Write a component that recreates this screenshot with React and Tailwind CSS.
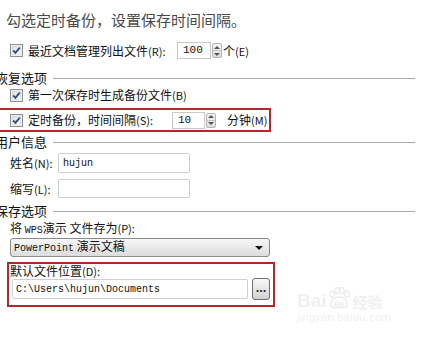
import React from 'react';

const cjk = "font-['SimSun','Noto_Sans_CJK_SC',sans-serif]";
const mono = "font-['Liberation_Mono','Noto_Sans_CJK_SC',monospace]";

const Check = () => (
  <svg width="13" height="13" viewBox="0 0 13 13" className="shrink-0">
    <defs>
      <linearGradient id="cb" x1="0" y1="0" x2="1" y2="1">
        <stop offset="0" stopColor="#dcdcdc" />
        <stop offset="1" stopColor="#ffffff" />
      </linearGradient>
    </defs>
    <rect x="0.5" y="0.5" width="12" height="12" fill="#fff" stroke="#8e8f8f" />
    <rect x="2" y="2" width="9" height="9" fill="url(#cb)" stroke="#c6c6c6" strokeWidth="0.6" />
    <path d="M3.2 6.4 L5.4 8.8 L9.8 3.6" fill="none" stroke="#2a4b87" strokeWidth="1.8" />
  </svg>
);

const Spin = () => (
  <div className="flex h-[15px] w-[10px] flex-col rounded-[2px] border border-[#b4b4b4] bg-gradient-to-b from-[#f6f6f6] to-[#dedede]">
    <div className="flex flex-1 items-center justify-center border-b border-[#c4c4c4]">
      <div className="h-0 w-0 border-x-[3px] border-b-[3px] border-x-transparent border-b-[#555]" />
    </div>
    <div className="flex flex-1 items-center justify-center">
      <div className="h-0 w-0 border-x-[3px] border-t-[3px] border-x-transparent border-t-[#555]" />
    </div>
  </div>
);

const Section = ({ title }) => (
  <div className="-ml-[5px] flex h-[14px] items-center">
    <span className="text-[13px] leading-[14px] text-[#111]">{title}</span>
    <div className="ml-[6px] mr-[18px] h-px flex-1 bg-[#a8a8a8]" />
  </div>
);

// 괄호 안 단축키는 조금 작게
const Key = ({ children }) => <span className="text-[11px]">{children}</span>;

export default function App() {
  return (
    <div className={`relative h-[347px] w-[433px] overflow-hidden whitespace-nowrap bg-white ${cjk} text-[12px] text-[#111]`}>
      <div className="ml-[6px] mt-[11px] h-[18px] text-[15px] leading-[18px] text-[#4a4a4a]">
        勾选定时备份，设置保存时间间隔。
      </div>

      <div className="ml-[10px] mt-[13px] flex h-[17px] items-center">
        <Check />
        <span className="ml-[5px] w-[149px] shrink-0 leading-[14px]">最近文档管理列出文件<Key>(R):</Key></span>
        <div className={`flex h-[17px] w-[34px] shrink-0 items-center border border-[#c9c9c9] pl-[5px] ${mono} text-[11px]`}>100</div>
        <div className="ml-px"><Spin /></div>
        <span className="ml-px leading-[14px]">个<Key>(E)</Key></span>
      </div>

      <div className="mt-[12px]"><Section title="恢复选项" /></div>

      <div className="ml-[10px] mt-[3px] flex h-[14px] items-center">
        <Check />
        <span className="ml-[5px] leading-[14px]">第一次保存时生成备份文件<Key>(B)</Key></span>
      </div>

      <div className="-ml-[4px] mt-[6px] flex h-[24px] w-[275px] items-center border-2 border-[#b3262d] pl-[12px]">
        <Check />
        <span className="ml-[5px] w-[144px] shrink-0 leading-[14px]">定时备份，时间间隔<Key>(S):</Key></span>
        <div className={`flex h-[17px] w-[33px] shrink-0 items-center border border-[#c9c9c9] pl-[5px] ${mono} text-[11px]`}>10</div>
        <div className="ml-px shrink-0"><Spin /></div>
        <span className="ml-[11px] shrink-0 leading-[14px]">分钟<Key>(M)</Key></span>
      </div>

      <div className="mt-[3px]"><Section title="用户信息" /></div>

      <div className="ml-[10px] mt-[4px] flex h-[20px] items-center">
        <span className="w-[48px] leading-[14px]">姓名<Key>(N):</Key></span>
        <div className={`flex h-[20px] w-[132px] items-center rounded-[2px] border border-[#cfcfcf] pl-[4px] ${mono} text-[10px]`}>hujun</div>
      </div>

      <div className="ml-[10px] mt-[6px] flex h-[19px] items-center">
        <span className="w-[48px] leading-[14px]">缩写<Key>(L):</Key></span>
        <div className="h-[19px] w-[132px] rounded-[2px] border border-[#cfcfcf]" />
      </div>

      <div className="mt-[6px]"><Section title="保存选项" /></div>

      <div className="ml-[10px] mt-[3px] h-[14px] leading-[14px]">将 <span className={`${mono} text-[10px]`}>WPS</span>演示 文件存为<Key>(P):</Key></div>

      <div className="ml-[10px] mt-[3px] flex h-[19px] w-[260px] items-center justify-between rounded-[3px] border border-[#8a8a8a] bg-gradient-to-b from-[#f7f7f7] to-[#dcdcdc] pl-[3px] pr-[6px]">
        <span className="leading-[14px]"><span className={`${mono} text-[10px]`}>PowerPoint</span> 演示文稿</span>
        <div className="h-0 w-0 border-x-[4px] border-t-[4px] border-x-transparent border-t-[#111]" />
      </div>

      <div className="ml-[7px] mt-[5px] h-[45px] w-[268px] border-2 border-[#b3262d] pb-[5px]">
        <div className="ml-px h-[14px] leading-[14px]">默认文件位置<Key>(D):</Key></div>
        <div className="ml-[3px] flex h-[22px] items-center">
          <div className={`flex h-[20px] w-[236px] items-center rounded-[2px] border border-[#cfcfcf] pl-[3px] ${mono} text-[10px]`}>C:\Users\hujun\Documents</div>
          <div className="ml-[4px] flex h-[22px] w-[18px] items-center justify-center rounded-[3px] border border-[#707070] bg-gradient-to-b from-[#f8f8f8] to-[#d2d2d2] pb-[3px] text-[11px] font-bold leading-none text-[#222]">
            ...
          </div>
        </div>
      </div>

      <div className="absolute left-[297px] top-[287px] text-[#f0f0f0]">
        <div className="flex items-end">
          <span className="font-['Liberation_Sans',sans-serif] text-[19px] font-bold leading-[19px]">Bai</span>
          <svg width="24" height="22" viewBox="0 0 24 22" className="mb-[1px]">
            <g fill="none" stroke="#ebebeb" strokeWidth="1.3">
              <ellipse cx="5" cy="7" rx="2.2" ry="3" />
              <ellipse cx="10" cy="3.5" rx="2.2" ry="3" />
              <ellipse cx="15" cy="3.5" rx="2.2" ry="3" />
              <ellipse cx="20" cy="7" rx="2.2" ry="3" />
              <path d="M4 18 C4 12 8 10 12 10 C16 10 20 12 20 18 C20 21 16 21 12 20 C8 21 4 21 4 18 Z" />
            </g>
            <text x="12" y="19" textAnchor="middle" fontSize="8" fontWeight="bold" fill="#ebebeb" fontFamily="Liberation Sans">du</text>
          </svg>
          <span className="ml-[2px] text-[15px] font-bold leading-[17px]">经验</span>
        </div>
        <div className="mt-[1px] font-['Liberation_Sans',sans-serif] text-[11px] leading-[12px] tracking-[0.3px]">jingyan.baidu.com</div>
      </div>
    </div>
  );
}
